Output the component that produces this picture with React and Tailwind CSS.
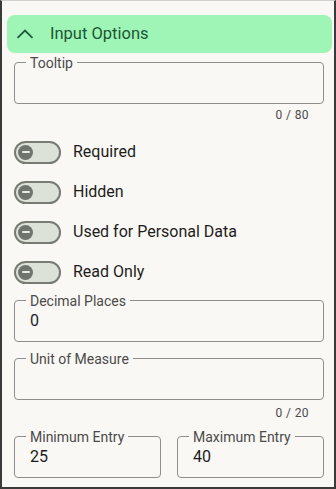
import React from 'react';

const Field = ({ label, value, className = '' }) => (
  <fieldset className={`min-w-0 border border-[#8e8e8c] rounded-[4px] ${className}`}>
    <legend className="ml-[11px] px-[4px] text-[14px] leading-[18px] whitespace-nowrap text-[#4a4a4a]">
      <span className="relative top-[1px]">{label}</span>
    </legend>
    <div className="h-[32px] px-[15px] text-[16px] leading-[24px] text-[#1c1c1c]">{value}</div>
  </fieldset>
);

const Counter = ({ children, className = '' }) => (
  <div className={`text-right pr-[15px] text-[12px] leading-[16px] tracking-[0.4px] text-[#4a4a4a] ${className}`}>
    {children}
  </div>
);

const Toggle = ({ label }) => (
  <div className="h-[40px] flex items-center">
    <div className="w-[47px] h-[23px] rounded-full border-2 border-[#777b74] bg-[#dde2d9] flex items-center pl-[2px]">
      <div className="w-[15px] h-[15px] rounded-full bg-[#6f756d] flex items-center justify-center">
        <div className="w-[8px] h-[2px] bg-[#e8ebe5] rounded-full" />
      </div>
    </div>
    <span className="ml-[12px] text-[16px] text-[#1d1d1b]">{label}</span>
  </div>
);

export default function App() {
  return (
    <div
      className="w-[336px] h-[489px] bg-[#faf8f4] border-t border-t-[#cfcfcf] border-x-2 border-b-2 border-[#3a3a3a] overflow-hidden pl-[5px] pr-[2px]"
      style={{ fontFamily: 'Roboto, "Liberation Sans", sans-serif' }}
    >
      {/* Header */}
      <div className="mt-[14px] h-[38px] rounded-[8px] bg-[#9ff5b5] flex items-center">
        <svg width="18" height="10" viewBox="0 0 18 10" className="ml-[9px]">
          <path d="M1.5 8.8 L9 1.6 L16.5 8.8" fill="none" stroke="#1d5a3a" strokeWidth="1.8" />
        </svg>
        <span className="ml-[16px] text-[16.5px] text-[#1b5534]">Input Options</span>
      </div>

      {/* Body */}
      <div className="pl-[7px] pr-[8px]">
        <Field label="Tooltip" value="" />
        <Counter className="mt-[3px]">0 / 80</Counter>

        <div className="mt-[9px]">
          <Toggle label="Required" />
          <Toggle label="Hidden" />
          <Toggle label="Used for Personal Data" />
          <Toggle label="Read Only" />
        </div>

        <Field label="Decimal Places" value="0" className="mt-[-1px]" />
        <Field label="Unit of Measure" value="" className="mt-[7px]" />
        <Counter className="mt-[5px]">0 / 20</Counter>

        <div className="mt-[6px] grid grid-cols-2 gap-x-[16px]">
          <Field label="Minimum Entry" value="25" />
          <Field label="Maximum Entry" value="40" />
        </div>
      </div>
    </div>
  );
}
